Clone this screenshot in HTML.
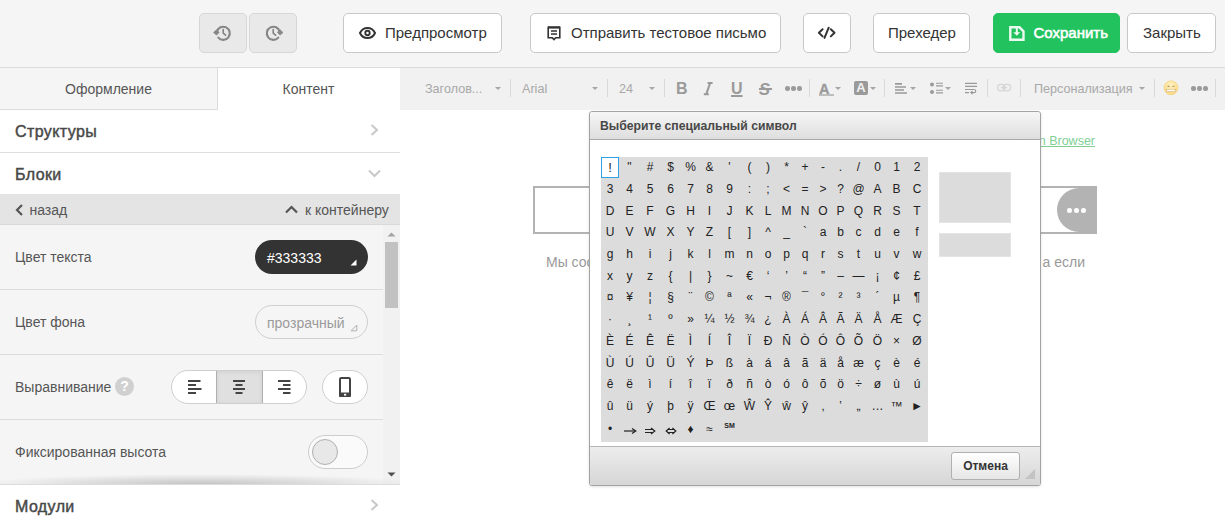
<!DOCTYPE html>
<html><head><meta charset="utf-8">
<style>
*{box-sizing:border-box;margin:0;padding:0}
html,body{width:1225px;height:527px;overflow:hidden;background:#fff;font-family:"Liberation Sans",sans-serif;color:#333}
.abs{position:absolute}
svg{position:absolute;overflow:visible}
#top{position:absolute;left:0;top:0;width:1225px;height:68px;background:#f5f5f5;border-bottom:1px solid #dcdcdc}
.btn{position:absolute;top:13px;height:40px;border:1px solid #c8c8c8;border-radius:5px;background:#fff;font-size:15px;color:#333;line-height:38px;white-space:nowrap}
.hist{background:#e9e9e9;border-color:#d6d6d6;width:48px}
#left{position:absolute;left:0;top:68px;width:400px;height:459px;background:#fff;overflow:hidden}
#editor{position:absolute;left:400px;top:68px;width:825px;height:459px;background:#fff;overflow:hidden}
.tab{top:0;height:42px;line-height:42px;text-align:center;font-size:14px;color:#555}
.sec{left:0;width:400px;height:43px;padding-left:15px;line-height:44px;font-size:16px;letter-spacing:0.4px;font-weight:normal;-webkit-text-stroke:0.45px #484848;color:#484848}
.nav{top:127px;line-height:30px;font-size:14px;color:#555}
.row{left:15px;line-height:64px;font-size:14px;color:#555}
.tb{top:12px;font-size:12.6px;line-height:18px;color:#a8a8a8;white-space:nowrap}
.tbi{top:11px;line-height:20px;color:#9a9a9a}
#dlg{position:absolute;left:589px;top:111px;width:452px;height:375px;background:#fff;border:1px solid #a3a3a3;border-radius:3px;box-shadow:0 1px 3px rgba(0,0,0,0.12)}
table.sc{border-collapse:collapse;table-layout:fixed;width:327px;background:#dcdcdc}
table.sc td{height:21.7px;padding:0;text-align:center;font-size:12px;color:#222;line-height:21px;white-space:nowrap}
table.sc tr.last td{height:24.3px}
</style></head><body>
<div id="top">
  <div class="btn hist" style="left:199px">
    <svg style="left:0;top:0" width="46" height="38" viewBox="200 14 46 38"><path d="M216.9 31.6A6.55 6.55 0 1 1 218.3 37.6" fill="none" stroke="#868686" stroke-width="2.1" stroke-linecap="round"/><path d="M213.6 32.6L216.4 29.9L219.2 32.3L216.6 35.1Z" fill="#868686" stroke="#868686" stroke-width="0.8" stroke-linejoin="round"/><path d="M223.2 29.6V33.1L225.6 35.2" fill="none" stroke="#868686" stroke-width="1.7" stroke-linecap="round" stroke-linejoin="round"/></svg>
  </div>
  <div class="btn hist" style="left:249px">
    <svg style="left:0;top:0" width="46" height="38" viewBox="200 14 46 38"><g transform="translate(446.6,0) scale(-1,1)"><path d="M216.9 31.6A6.55 6.55 0 1 1 218.3 37.6" fill="none" stroke="#868686" stroke-width="2.1" stroke-linecap="round"/><path d="M213.6 32.6L216.4 29.9L219.2 32.3L216.6 35.1Z" fill="#868686" stroke="#868686" stroke-width="0.8" stroke-linejoin="round"/></g><path d="M223.2 29.6V33.1L225.6 35.2" fill="none" stroke="#868686" stroke-width="1.7" stroke-linecap="round" stroke-linejoin="round"/></svg>
  </div>
  <div class="btn" style="left:343px;width:159px">
    <svg style="left:15px;top:13px" width="17" height="12" viewBox="0 0 17 12"><path d="M8.5 1C5.2 1 2.3 3.1 1 6c1.3 2.9 4.2 5 7.5 5s6.2-2.1 7.5-5C14.7 3.1 11.8 1 8.5 1z" fill="none" stroke="#333" stroke-width="2"/><circle cx="8.5" cy="6" r="2.2" fill="none" stroke="#333" stroke-width="1.9"/></svg>
    <span class="abs" style="left:41px">Предпросмотр</span></div>
  <div class="btn" style="left:530px;width:251px">
    <svg style="left:16px;top:12px" width="14" height="15" viewBox="0 0 14 15"><path d="M1.2 1.3H12.8V11.8H8.7L7 13.6L5.3 11.8H1.2Z" fill="none" stroke="#333" stroke-width="1.6"/><path d="M1 1.5H13" stroke="#333" stroke-width="2.2"/><path d="M4 5H10M4 8H10" stroke="#333" stroke-width="1.5"/></svg>
    <span class="abs" style="left:40px">Отправить тестовое письмо</span></div>
  <div class="btn" style="left:803px;width:48px">
    <svg style="left:0;top:0" width="46" height="38" viewBox="804 14 46 38"><path d="M822.6 29.2L818.9 32.8L822.6 36.4M830.8 29.2L834.5 32.8L830.8 36.4M828.7 27.7L824.5 37.9" fill="none" stroke="#333" stroke-width="2" stroke-linecap="round" stroke-linejoin="round"/></svg>
  </div>
  <div class="btn" style="left:873px;width:97px"><span class="abs" style="left:14px">Прехедер</span></div>
  <div class="btn" style="left:993px;width:127px;background:#22c35e;border-color:#22c35e;color:#fff;font-weight:bold">
    <svg style="left:15px;top:12px" width="16" height="15" viewBox="0 0 16 15"><path d="M1.3 1.3H10.5L14.5 5.3V13.7H1.3Z" fill="none" stroke="#ecf9f0" stroke-width="2.4"/><path d="M6.8 1V6.2H4.3L7.8 9.8L11.3 6.2H8.8V1Z" fill="#ecf9f0"/></svg>
    <span class="abs" style="left:39.5px;font-weight:normal;-webkit-text-stroke:0.55px #fff">Сохранить</span></div>
  <div class="btn" style="left:1127px;width:89px"><span class="abs" style="left:15px">Закрыть</span></div>
</div>
<div id="left">
  <div class="abs" style="left:0;top:0;width:218px;height:42px;background:#f5f5f5;border-right:1px solid #dcdcdc;border-bottom:1px solid #dcdcdc"></div>
  <div class="abs tab" style="left:0;width:217px">Оформление</div>
  <div class="abs tab" style="left:217px;width:183px">Контент</div>
  <div class="abs sec" style="top:42px;border-bottom:1px solid #dedede">Структуры</div>
  <svg style="left:370px;top:56px" width="9" height="12" viewBox="0 0 9 12"><path d="M1.5 1L7 6L1.5 11" fill="none" stroke="#c8c8c8" stroke-width="2"/></svg>
  <div class="abs sec" style="top:85px">Блоки</div>
  <svg style="left:368px;top:101px" width="13" height="9" viewBox="0 0 13 9"><path d="M1 1.5L6.5 7L12 1.5" fill="none" stroke="#c8c8c8" stroke-width="2"/></svg>
  <div class="abs" style="left:0;top:126px;width:400px;height:31px;background:#e4e4e4;border-bottom:1px solid #d9d9d9"></div>
  <svg style="left:15px;top:136px" width="9" height="12" viewBox="0 0 9 12"><path d="M7 1L2 6L7 11" fill="none" stroke="#555" stroke-width="2.2"/></svg>
  <div class="abs nav" style="left:29.5px">назад</div>
  <svg style="left:285px;top:137px" width="13" height="9" viewBox="0 0 13 9"><path d="M1 7.5L6.5 2L12 7.5" fill="none" stroke="#555" stroke-width="2.2"/></svg>
  <div class="abs nav" style="left:305px">к контейнеру</div>
  <div class="abs" style="left:0;top:157px;width:400px;height:260px;background:#f5f5f5"></div>
  <div class="abs row" style="top:157px">Цвет текста</div>
  <div class="abs" style="left:255px;top:172px;width:113px;height:34px;border-radius:17px;background:#333"></div>
  <div class="abs" style="left:267px;top:181px;font-size:14px;color:#fff;line-height:18px">#333333</div>
  <svg style="left:350px;top:191px" width="7" height="7" viewBox="0 0 7 7"><path d="M6.5 0.5V6.5H0.5Z" fill="#fff"/></svg>
  <div class="abs" style="left:0;top:221px;width:383px;height:1px;background:#dcdcdc"></div>
  <div class="abs row" style="top:222px">Цвет фона</div>
  <div class="abs" style="left:255px;top:237px;width:113px;height:34px;border-radius:17px;border:1px solid #cfcfcf"></div>
  <div class="abs" style="left:267px;top:246px;font-size:14px;color:#9a9a9a;line-height:18px">прозрачный</div>
  <svg style="left:350px;top:256px" width="8" height="8" viewBox="0 0 8 8"><path d="M6.8 1V6.8H1Z" fill="none" stroke="#aaa" stroke-width="0.9" stroke-linejoin="round"/></svg>
  <div class="abs" style="left:0;top:286px;width:383px;height:1px;background:#dcdcdc"></div>
  <div class="abs row" style="top:287px">Выравнивание</div>
  <div class="abs" style="left:115px;top:309px;width:19px;height:19px;border-radius:50%;background:#d0d0d0;color:#fff;font-size:14px;font-weight:bold;text-align:center;line-height:19px">?</div>
  <div class="abs" style="left:171px;top:302px;width:136px;height:34px;border-radius:17px;border:1px solid #cfcfcf;background:#fff;overflow:hidden">
    <div class="abs" style="left:44px;top:0;width:47px;height:32px;background:#e0e0e0;border-left:1px solid #b0b0b0;border-right:1px solid #b0b0b0;box-shadow:inset 0 1px 4px rgba(0,0,0,0.08)"></div>
  </div>
  <svg style="left:188px;top:312px" width="14" height="14" viewBox="0 0 14 14"><path d="M0 1H12.5M0 5H8M0 9H13.5M0 13H8" stroke="#444" stroke-width="1.8"/></svg>
  <svg style="left:233px;top:312px" width="14" height="14" viewBox="0 0 14 14"><path d="M0 1H12M2.5 5H9.5M0 9H12M2.5 13H9.5" stroke="#444" stroke-width="1.8"/></svg>
  <svg style="left:278px;top:312px" width="14" height="14" viewBox="0 0 14 14"><path d="M0 1H12.5M5 5H12.5M0 9H12.5M5 13H12.5" stroke="#444" stroke-width="1.8"/></svg>
  <div class="abs" style="left:322px;top:302px;width:46px;height:34px;border-radius:17px;border:1px solid #cfcfcf;background:#fff"></div>
  <svg style="left:339px;top:309px" width="12" height="20" viewBox="0 0 12 20"><rect x="1" y="1" width="10" height="18" rx="1.2" fill="none" stroke="#444" stroke-width="2"/><rect x="0" y="15.5" width="12" height="4.5" rx="1" fill="#444"/><rect x="5" y="16.8" width="2.2" height="1.8" fill="#fff"/></svg>
  <div class="abs" style="left:0;top:351px;width:383px;height:1px;background:#dcdcdc"></div>
  <div class="abs row" style="top:352px">Фиксированная высота</div>
  <div class="abs" style="left:308px;top:367px;width:60px;height:34px;border-radius:17px;border:1px solid #cdcdcd;background:#fafafa"></div>
  <div class="abs" style="left:312px;top:371px;width:26px;height:26px;border-radius:50%;border:1px solid #b0b0b0;background:#e8e8e8"></div>
  <div class="abs" style="left:383px;top:157px;width:17px;height:260px;background:#f1f1f1"></div>
  <div class="abs" style="left:385px;top:174px;width:13px;height:66px;background:#c1c1c1"></div>
  <svg style="left:387px;top:164px" width="9" height="5" viewBox="0 0 9 5"><path d="M0.5 4.5L4.5 0.5L8.5 4.5Z" fill="#a3a3a3"/></svg>
  <svg style="left:387px;top:404px" width="9" height="5" viewBox="0 0 9 5"><path d="M0.5 0.5L4.5 4.5L8.5 0.5Z" fill="#505050"/></svg>
  <div class="abs" style="left:0;top:416px;width:400px;height:43px;background:#fff;border-top:1px solid #dcdcdc"></div>
  <div class="abs" style="left:0;top:406px;width:400px;height:10px;background:radial-gradient(ellipse 55% 100% at 50% 100%, rgba(0,0,0,0.2), rgba(0,0,0,0) 100%)"></div>
  <div class="abs sec" style="top:417px;height:42px">Модули</div>
  <svg style="left:370px;top:431px" width="9" height="12" viewBox="0 0 9 12"><path d="M1.5 1L7 6L1.5 11" fill="none" stroke="#c8c8c8" stroke-width="2"/></svg>
</div>
<div id="editor">
<div class="abs" style="left:0;top:0;width:825px;height:42px;background:#f1f1f1"></div>
<div class="abs" style="left:110px;top:11px;width:1px;height:18px;background:#d9d9d9"></div>
<div class="abs" style="left:207px;top:11px;width:1px;height:18px;background:#d9d9d9"></div>
<div class="abs" style="left:264px;top:11px;width:1px;height:18px;background:#d9d9d9"></div>
<div class="abs" style="left:409px;top:11px;width:1px;height:18px;background:#d9d9d9"></div>
<div class="abs" style="left:484px;top:11px;width:1px;height:18px;background:#d9d9d9"></div>
<div class="abs" style="left:587px;top:11px;width:1px;height:18px;background:#d9d9d9"></div>
<div class="abs" style="left:620px;top:11px;width:1px;height:18px;background:#d9d9d9"></div>
<div class="abs" style="left:754px;top:11px;width:1px;height:18px;background:#d9d9d9"></div>
<div class="abs" style="left:815px;top:11px;width:1px;height:18px;background:#d9d9d9"></div>
<div class="abs tb" style="left:25px">Заголов...</div>
<svg style="left:95px;top:19px" width="6" height="3" viewBox="0 0 6 3"><path d="M0 0H6L3 3Z" fill="#a6a6a6"/></svg>
<div class="abs tb" style="left:122px">Arial</div>
<svg style="left:192px;top:19px" width="6" height="3" viewBox="0 0 6 3"><path d="M0 0H6L3 3Z" fill="#a6a6a6"/></svg>
<div class="abs tb" style="left:219px">24</div>
<svg style="left:249px;top:19px" width="6" height="3" viewBox="0 0 6 3"><path d="M0 0H6L3 3Z" fill="#a6a6a6"/></svg>
<div class="abs tbi" style="left:276px;font-weight:bold;font-size:16px">B</div>
<svg style="left:303px;top:13.6px" width="10" height="13" viewBox="0 0 10 13"><path d="M4.6 1H9.6M0.8 12.2H5.8M7.1 1L3.3 12.2" fill="none" stroke="#9a9a9a" stroke-width="2.1"/></svg>
<div class="abs tbi" style="left:331px;font-weight:bold;font-size:16px;text-decoration:underline;text-decoration-thickness:1.5px;text-underline-offset:1px">U</div>
<div class="abs tbi" style="left:359px;top:10.5px;font-weight:bold;font-size:16.5px;font-style:italic">S</div><div class="abs" style="left:359px;top:20px;width:13px;height:1.6px;background:#9a9a9a"></div>
<div class="abs" style="left:385px;top:18px;width:4.5px;height:4.5px;border-radius:50%;background:#9a9a9a"></div><div class="abs" style="left:391px;top:18px;width:4.5px;height:4.5px;border-radius:50%;background:#9a9a9a"></div><div class="abs" style="left:397px;top:18px;width:4.5px;height:4.5px;border-radius:50%;background:#9a9a9a"></div>
<div class="abs tbi" style="left:419px;top:10.5px;font-weight:bold;font-size:14.5px;-webkit-text-stroke:0.3px #9a9a9a">A</div>
<div class="abs" style="left:419px;top:26px;width:15px;height:2px;background:#bdbdbd"></div>
<svg style="left:435px;top:19px" width="6" height="3" viewBox="0 0 6 3"><path d="M0 0H6L3 3Z" fill="#a6a6a6"/></svg>
<div class="abs" style="left:454px;top:13px;width:14px;height:14px;border-radius:2px;background:#9a9a9a;color:#f1f1f1;font-weight:bold;font-size:13px;line-height:14px;text-align:center">A</div>
<svg style="left:470px;top:19px" width="6" height="3" viewBox="0 0 6 3"><path d="M0 0H6L3 3Z" fill="#a6a6a6"/></svg>
<svg style="left:0;top:0" width="1" height="1" viewBox="400 68 1 1"><path d="M895 83.8H902M895 87H906M895 90H904M895 93H907" stroke="#9a9a9a" stroke-width="1.7"/></svg>
<svg style="left:510px;top:19px" width="6" height="3" viewBox="0 0 6 3"><path d="M0 0H6L3 3Z" fill="#a6a6a6"/></svg>
<svg style="left:0;top:0" width="1" height="1" viewBox="400 68 1 1"><circle cx="932" cy="84.5" r="2" fill="#9a9a9a"/><circle cx="932" cy="92" r="2" fill="#9a9a9a"/><path d="M936 83.3H943M936 85.9H943M936 90.3H943M936 92.9H943" stroke="#9a9a9a" stroke-width="1.1"/></svg>
<svg style="left:545px;top:19px" width="6" height="3" viewBox="0 0 6 3"><path d="M0 0H6L3 3Z" fill="#a6a6a6"/></svg>
<svg style="left:0;top:0" width="1" height="1" viewBox="400 68 1 1"><path d="M965 83.3H977M965 86.4H977M965 89.5H974.5M965 92.6H969" stroke="#9a9a9a" stroke-width="1.2"/><path d="M974.5 89.5A1.6 1.6 0 0 1 974.5 92.6H971.5" fill="none" stroke="#9a9a9a" stroke-width="1.2"/><path d="M969.8 92.6L972.6 90.4V94.8Z" fill="#9a9a9a"/></svg>
<svg style="left:0;top:0" width="1" height="1" viewBox="400 68 1 1"><rect x="997.6" y="84.3" width="7.4" height="6.6" rx="3.3" fill="none" stroke="#d6d6d6" stroke-width="1.3"/><rect x="1003.2" y="84.3" width="7.4" height="6.6" rx="3.3" fill="none" stroke="#d6d6d6" stroke-width="1.3"/><path d="M1001 87.6H1007.2" stroke="#d6d6d6" stroke-width="1.3"/></svg>
<div class="abs tb" style="left:634px">Персонализация</div>
<svg style="left:739px;top:19px" width="6" height="3" viewBox="0 0 6 3"><path d="M0 0H6L3 3Z" fill="#a6a6a6"/></svg>
<svg style="left:763px;top:12px" width="16" height="16" viewBox="0 0 16 16"><defs><radialGradient id="eg" cx="50%" cy="30%" r="70%"><stop offset="0" stop-color="#fff2c4"/><stop offset="1" stop-color="#f9d879"/></radialGradient></defs><circle cx="8" cy="7.8" r="7" fill="url(#eg)" stroke="#f5cf78" stroke-width="0.6"/><path d="M4.6 6.4H6.6M9.4 6.4H11.4" stroke="#b59a6a" stroke-width="1.2"/><path d="M2.8 9.2H13.2L12.2 11.8H3.8Z" fill="#c7a56a"/><rect x="3.8" y="9.6" width="8.4" height="1.7" fill="#fff"/></svg>
<div class="abs" style="left:791px;top:18px;width:4.5px;height:4.5px;border-radius:50%;background:#9a9a9a"></div><div class="abs" style="left:797px;top:18px;width:4.5px;height:4.5px;border-radius:50%;background:#9a9a9a"></div><div class="abs" style="left:803px;top:18px;width:4.5px;height:4.5px;border-radius:50%;background:#9a9a9a"></div>
<div class="abs" style="left:0;top:42px;width:825px;height:417px;background:#fff"></div>
<div class="abs" style="left:500px;top:65px;width:195px;text-align:right;font-size:12.5px;color:#80d096;text-decoration:underline;line-height:16px">View in Browser</div>
<div class="abs" style="left:133px;top:118px;width:564px;height:48px;border:2px solid #b3b3b3;border-right:0"></div>
<div class="abs" style="left:657px;top:120px;width:40px;height:44px;background:#b3b3b3;border-radius:22px 0 0 22px"></div>
<div class="abs" style="left:657px;top:120px;width:40px;height:44px;border-radius:22px 0 0 22px"><div class="abs" style="left:10px;top:20px;width:4.6px;height:4.6px;border-radius:50%;background:#fff"></div><div class="abs" style="left:17px;top:20px;width:4.6px;height:4.6px;border-radius:50%;background:#fff"></div><div class="abs" style="left:24px;top:20px;width:4.6px;height:4.6px;border-radius:50%;background:#fff"></div></div>
<div class="abs" style="left:146px;top:185px;font-size:14px;color:#999;line-height:18px;white-space:nowrap">Мы сообщаем вам</div>
<div class="abs" style="left:600px;top:185px;width:85px;font-size:14px;color:#999;line-height:18px;white-space:nowrap;text-align:right">вам, а если</div>
</div>
<div id="dlg">
  <div class="abs" style="left:0;top:0;width:450px;height:28px;background:linear-gradient(#f6f6f6,#dedede);border-bottom:1px solid #a9a9a9;border-radius:3px 3px 0 0"></div>
  <div class="abs" style="left:10px;top:6px;font-size:12.2px;font-weight:bold;color:#484848;line-height:16px;white-space:nowrap">Выберите специальный символ</div>
  <div class="abs" style="left:11px;top:45px"><table class="sc" cellspacing="0" cellpadding="0"><colgroup><col style="width:18px"><col style="width:21px"><col style="width:20px"><col style="width:21px"><col style="width:19px"><col style="width:19px"><col style="width:21px"><col style="width:19px"><col style="width:18px"><col style="width:19px"><col style="width:18px"><col style="width:18px"><col style="width:17px"><col style="width:19px"><col style="width:19px"><col style="width:19px"><col style="width:22px"></colgroup><tr><td>!</td><td>"</td><td>#</td><td>$</td><td>%</td><td>&amp;</td><td>'</td><td>(</td><td>)</td><td>*</td><td>+</td><td>-</td><td>.</td><td>/</td><td>0</td><td>1</td><td>2</td></tr><tr><td>3</td><td>4</td><td>5</td><td>6</td><td>7</td><td>8</td><td>9</td><td>:</td><td>;</td><td>&lt;</td><td>=</td><td>&gt;</td><td>?</td><td>@</td><td>A</td><td>B</td><td>C</td></tr><tr><td>D</td><td>E</td><td>F</td><td>G</td><td>H</td><td>I</td><td>J</td><td>K</td><td>L</td><td>M</td><td>N</td><td>O</td><td>P</td><td>Q</td><td>R</td><td>S</td><td>T</td></tr><tr><td>U</td><td>V</td><td>W</td><td>X</td><td>Y</td><td>Z</td><td>[</td><td>]</td><td>^</td><td>_</td><td>`</td><td>a</td><td>b</td><td>c</td><td>d</td><td>e</td><td>f</td></tr><tr><td>g</td><td>h</td><td>i</td><td>j</td><td>k</td><td>l</td><td>m</td><td>n</td><td>o</td><td>p</td><td>q</td><td>r</td><td>s</td><td>t</td><td>u</td><td>v</td><td>w</td></tr><tr><td>x</td><td>y</td><td>z</td><td>{</td><td>|</td><td>}</td><td>~</td><td>€</td><td>‘</td><td>’</td><td>“</td><td>”</td><td>–</td><td>—</td><td>¡</td><td>¢</td><td>£</td></tr><tr><td>¤</td><td>¥</td><td>¦</td><td>§</td><td>¨</td><td>©</td><td>ª</td><td>«</td><td>¬</td><td>®</td><td>¯</td><td>°</td><td>²</td><td>³</td><td>´</td><td>µ</td><td>¶</td></tr><tr><td>·</td><td>¸</td><td>¹</td><td>º</td><td>»</td><td>¼</td><td>½</td><td>¾</td><td>¿</td><td>À</td><td>Á</td><td>Â</td><td>Ã</td><td>Ä</td><td>Å</td><td>Æ</td><td>Ç</td></tr><tr><td>È</td><td>É</td><td>Ê</td><td>Ë</td><td>Ì</td><td>Í</td><td>Î</td><td>Ï</td><td>Ð</td><td>Ñ</td><td>Ò</td><td>Ó</td><td>Ô</td><td>Õ</td><td>Ö</td><td>×</td><td>Ø</td></tr><tr><td>Ù</td><td>Ú</td><td>Û</td><td>Ü</td><td>Ý</td><td>Þ</td><td>ß</td><td>à</td><td>á</td><td>â</td><td>ã</td><td>ä</td><td>å</td><td>æ</td><td>ç</td><td>è</td><td>é</td></tr><tr><td>ê</td><td>ë</td><td>ì</td><td>í</td><td>î</td><td>ï</td><td>ð</td><td>ñ</td><td>ò</td><td>ó</td><td>ô</td><td>õ</td><td>ö</td><td>÷</td><td>ø</td><td>ù</td><td>ú</td></tr><tr><td>û</td><td>ü</td><td>ý</td><td>þ</td><td>ÿ</td><td>Œ</td><td>œ</td><td>Ŵ</td><td>Ŷ</td><td>ŵ</td><td>ŷ</td><td>‚</td><td>‛</td><td>„</td><td>…</td><td>™</td><td>►</td></tr><tr class="last"><td>•</td><td><svg style="position:relative;top:1px" width="12" height="6" viewBox="0 0 12 6"><path d="M0 3H11" stroke="#222" stroke-width="1.2"/><path d="M8 0.5L11.8 3L8 5.5" fill="none" stroke="#222" stroke-width="1.2"/></svg></td><td><svg style="position:relative;top:1px" width="10" height="6" viewBox="0 0 10 6"><path d="M0 1.5H7.5M0 4.5H7.5" stroke="#222" stroke-width="1.1"/><path d="M6 0L9.8 3L6 6" fill="none" stroke="#222" stroke-width="1.2"/></svg></td><td><svg style="position:relative;top:1px" width="10" height="6" viewBox="0 0 10 6"><path d="M2 1.5H8M2 4.5H8" stroke="#222" stroke-width="1.1"/><path d="M3.6 0L0.2 3L3.6 6M6.4 0L9.8 3L6.4 6" fill="none" stroke="#222" stroke-width="1.2"/></svg></td><td>♦</td><td>≈</td><td><span style="font-size:7px;font-weight:bold;position:relative;top:-4px">SM</span></td><td></td><td></td><td></td><td></td><td></td><td></td><td></td><td></td><td></td><td></td></tr></table></div>
  <div class="abs" style="left:11px;top:45px;width:18px;height:21px;border:2px solid #2f9fe8;background:#fff;border-width:1.5px"></div>
  <div class="abs" style="left:11px;top:45px;width:18px;height:21px;text-align:center;font-size:13px;line-height:21px;color:#222">!</div>
  <div class="abs" style="left:349px;top:60px;width:72px;height:51px;background:#dcdcdc;border:1px solid #e4e4e4"></div>
  <div class="abs" style="left:349px;top:121px;width:72px;height:24px;background:#dcdcdc;border:1px solid #e4e4e4"></div>
  <div class="abs" style="left:0;top:334px;width:450px;height:39px;background:linear-gradient(#ededed,#d6d6d6);border-top:1px solid #b5b5b5;border-radius:0 0 3px 3px"></div>
  <div class="abs" style="left:361px;top:340px;width:69px;height:28px;border:1px solid #b0b0b0;border-radius:3px;background:linear-gradient(#ffffff,#e6e6e6);font-size:12px;font-weight:bold;color:#333;text-align:center;line-height:26px">Отмена</div>
  <svg style="left:435px;top:357px" width="11" height="11" viewBox="0 0 11 11"><path d="M10 0V10H0Z" fill="#c3c3c3"/></svg>
</div>
</body></html>
